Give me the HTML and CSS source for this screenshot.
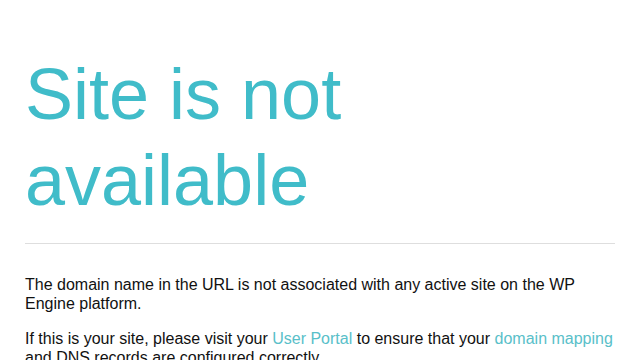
FILE: index.html
```html
<!DOCTYPE html>
<html lang="en">
<head>
<meta charset="utf-8">
<title>Site is not available</title>
<link rel="stylesheet" href="styles.css">
</head>
<body>
<main class="page">
  <h1 class="title">Site is not available</h1>
  <hr class="rule">
  <p class="text">The domain name in the URL is not associated with any active site on the WP Engine platform.</p>
  <p class="text">If this is your site, please visit your <a class="link" href="#">User Portal</a> to ensure that your <a class="link" href="#">domain mapping</a> and DNS records are configured correctly.</p>
</main>
</body>
</html>
```
FILE: styles.css
```css
html, body {
  margin: 0;
  padding: 0;
  background: #fff;
}
body {
  font-family: "Liberation Sans", Arial, sans-serif;
  color: #111;
}
.page {
  padding: 0 25px;
}
.title {
  margin: 51px 0 19px;
  font-size: 72px;
  line-height: 1.2;
  font-weight: 400;
  color: #40bcc9;
  width: 340px;
}
.rule {
  margin: 0;
  border: 0;
  border-top: 1px solid #dedede;
  height: 0;
}
.text {
  margin: 31px 0 0;
  font-size: 16px;
  line-height: 19px;
}
.text + .text {
  margin-top: 16px;
}
.link {
  color: #59c0c9;
  text-decoration: none;
}
```
